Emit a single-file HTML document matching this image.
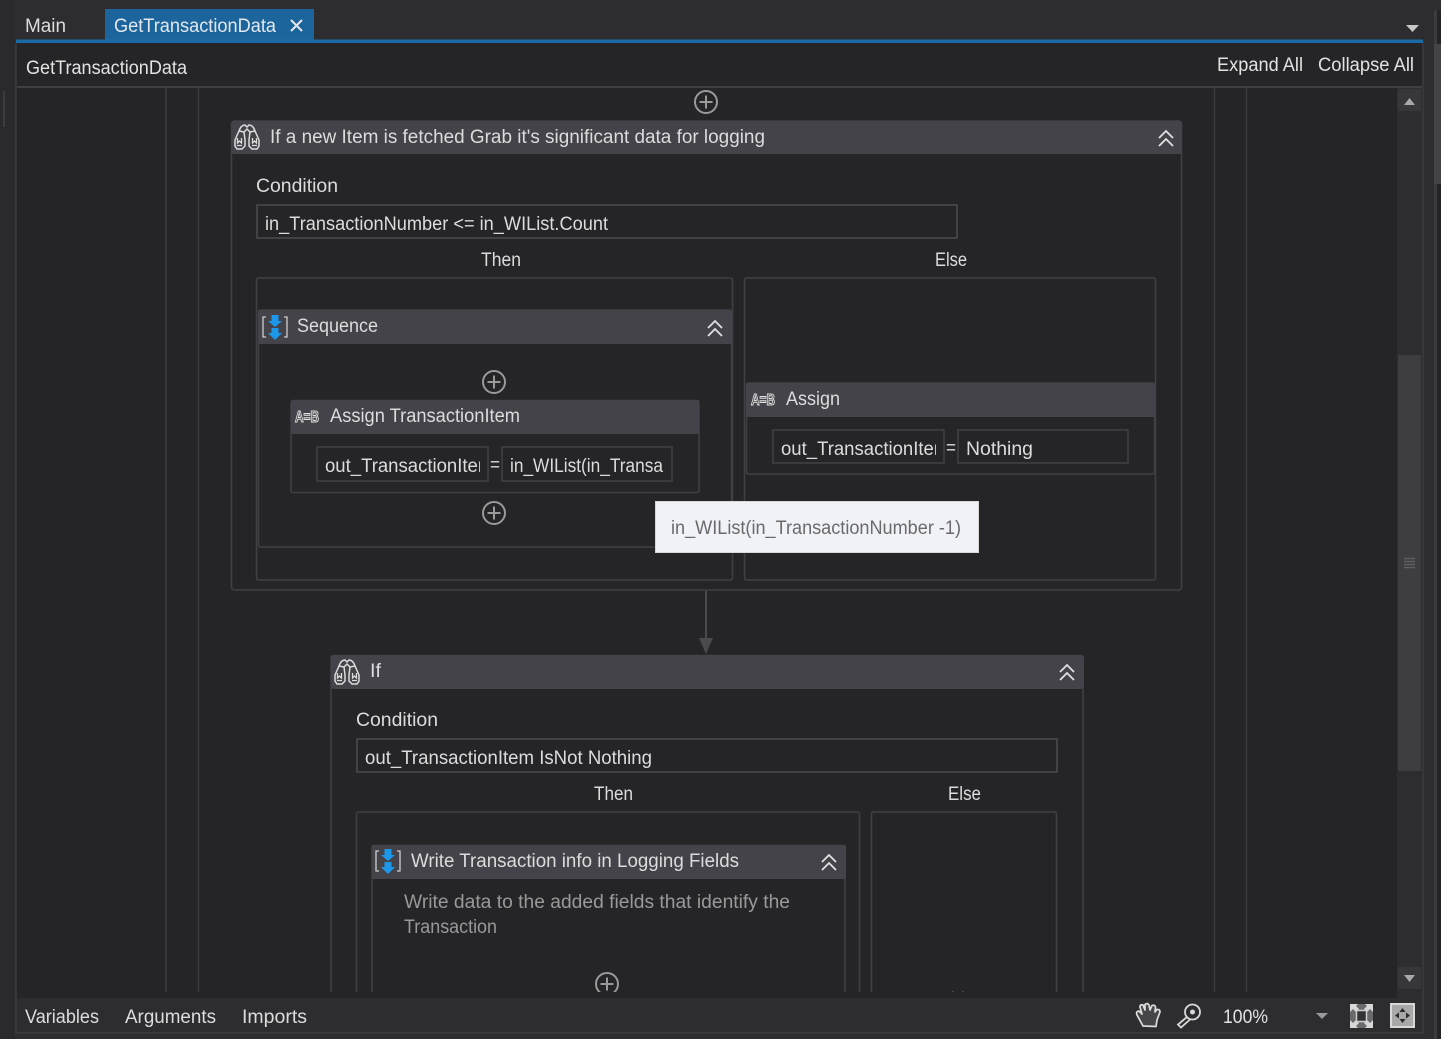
<!DOCTYPE html>
<html><head><meta charset="utf-8"><title>GetTransactionData</title>
<style>
html,body{margin:0;padding:0;background:#2d2d30;width:1441px;height:1039px;overflow:hidden}
svg{display:block}
text{font-family:"Liberation Sans",sans-serif;font-size:19px;fill:#dcdcdc}
.b{fill:none;stroke:#404044;stroke-width:1.600}
.h{fill:#434349}
</style></head><body>
<svg width="1441" height="1039" viewBox="0 0 1441 1039" xmlns="http://www.w3.org/2000/svg">
<defs>
<clipPath id="c"><rect x="17" y="87" width="1380" height="905"/></clipPath>
<clipPath id="t1"><rect x="320" y="450" width="160" height="30"/></clipPath>
<clipPath id="t2"><rect x="776" y="433" width="160" height="30"/></clipPath>
<g id="plus" fill="none" stroke="#9a9a9a" stroke-width="2"><circle cx="0" cy="0" r="11"/><path d="M-6.500 0H6.500M0-6.500V6.500"/></g>
<path id="chev" d="M-7 -1L0 -8L7 -1M-7 7L0 0L7 7" fill="none" stroke="#e0e0e0" stroke-width="1.800"/>
<g id="if" fill="none" stroke="#dcdcdc" stroke-width="1.500">
<path d="M-8 -6Q-6 -12 -2 -12L0 -10L2 -12Q6 -12 8 -6"/>
<path d="M-3 -5L0 -8L3 -5"/>
<path d="M-8 -6L-12 3V9L-10 12H-5L-2 9V3L-3 -5Z"/>
<path d="M8 -6L12 3V9L10 12H5L2 9V3L3 -5Z"/>
<path d="M-9.500 1V6L-7.500 4L-5.500 6V1M5.500 1V6L7.500 4L9.500 6V1" stroke-width="1.300"/>
<path d="M-10 8.500H-5M5 8.500H10" stroke-width="1.300"/>
</g>
<g id="seq"><path d="M-9 -10H-12V10H-9M9 -10H12V10H9" fill="none" stroke="#cfcfcf" stroke-width="1.300"/><path d="M-3.500 -12H3.500V-6H7L0 0L-7 -6H-3.500Z M-3.500 1H3.500V6H7L0 13L-7 6H-3.500Z" fill="#1c97ea"/></g>
<g id="ab"><text x="-12" y="6" style="font-size:16px;font-weight:bold;fill:#4a4a4e;stroke:#e0e0e0;stroke-width:1" textLength="24" lengthAdjust="spacingAndGlyphs">A=B</text></g>
</defs>

<rect width="1441" height="1039" fill="#2d2d30"/>
<rect x="0" y="0" width="15" height="1039" fill="#2a2a2d"/>
<rect x="16" y="42" width="1407" height="990" fill="#252528"/>
<path d="M16 42V1034M1423 42V1034" stroke="#3c3c40" stroke-width="1.500"/>
<rect x="3" y="91" width="2" height="36" fill="#3c3c40"/>
<rect x="1430" y="0" width="11" height="1039" fill="#2d2d30"/>
<rect x="1434" y="10" width="3" height="1029" fill="#3a3a3e"/>
<rect x="1437" y="10" width="4" height="1029" fill="#242426"/>
<rect x="1434" y="44" width="7" height="140" fill="#444448"/>

<!-- tabs -->
<rect x="105" y="9" width="209" height="31" fill="#1c659c"/>
<rect x="16" y="39.500" width="1407" height="3.500" fill="#1b6aa5"/>
<text x="25" y="32" textLength="41" lengthAdjust="spacingAndGlyphs">Main</text>
<text x="114" y="32" textLength="162" lengthAdjust="spacingAndGlyphs" style="fill:#e4e8ee">GetTransactionData</text>
<path d="M291 20L302 31M302 20L291 31" stroke="#e6e6e6" stroke-width="2"/>
<path d="M1406 25H1419L1412.500 32Z" fill="#c8c8c8"/>

<!-- breadcrumb -->
<text x="26" y="74" textLength="161" lengthAdjust="spacingAndGlyphs" style="fill:#e2e2e2">GetTransactionData</text>
<text x="1217" y="71" textLength="86" lengthAdjust="spacingAndGlyphs" style="fill:#e2e2e2">Expand All</text>
<text x="1318" y="71" textLength="96" lengthAdjust="spacingAndGlyphs" style="fill:#e2e2e2">Collapse All</text>
<rect x="17" y="86" width="1405" height="2" fill="#3f3f43"/>

<!-- scrollbar -->
<rect x="1397" y="88" width="25" height="910" fill="#2d2d30"/>
<rect x="1398" y="89" width="23" height="22" fill="#37373b"/>
<path d="M1404 105H1415L1409.500 98Z" fill="#a8a8a8"/>
<rect x="1398" y="355" width="23" height="416" fill="#3e3e42"/>
<path d="M1404 558.500H1415M1404 561.500H1415M1404 564.500H1415M1404 567.500H1415" stroke="#5f5f63" stroke-width="1.500" fill="none"/>
<rect x="1398" y="967" width="23" height="22" fill="#37373b"/>
<path d="M1404 975H1415L1409.500 982Z" fill="#a8a8a8"/>

<g clip-path="url(#c)">
<path d="M166 88V992M198.500 88V992M1214.500 88V992M1246.500 88V992" stroke="#3c3c40" stroke-width="1.500"/>
<use href="#plus" x="706" y="102"/>

<!-- If 1 -->
<rect x="231.500" y="121" width="950" height="469" rx="3" class="b"/>
<rect x="231" y="121" width="951" height="33" rx="3" class="h"/>
<use href="#if" x="247" y="137"/>
<text x="270" y="143" textLength="495" lengthAdjust="spacingAndGlyphs">If a new Item is fetched Grab it's significant data for logging</text>
<use href="#chev" x="1166" y="139"/>
<text x="256" y="192" textLength="82" lengthAdjust="spacingAndGlyphs">Condition</text>
<rect x="257" y="205" width="700" height="33" class="b" style="stroke:#4a4a4e"/>
<text x="265" y="230" textLength="343" lengthAdjust="spacingAndGlyphs">in_TransactionNumber &lt;= in_WIList.Count</text>
<text x="481" y="266" textLength="40" lengthAdjust="spacingAndGlyphs">Then</text>
<text x="935" y="266" textLength="32" lengthAdjust="spacingAndGlyphs">Else</text>
<rect x="256.500" y="278" width="476" height="302" rx="2" class="b"/>
<rect x="744.500" y="278" width="411" height="302" rx="2" class="b"/>

<!-- Sequence -->
<rect x="258.500" y="310" width="473" height="237" rx="2" class="b"/>
<rect x="258" y="310" width="474" height="34" rx="2" class="h"/>
<use href="#seq" x="275" y="327"/>
<text x="297" y="332" textLength="81" lengthAdjust="spacingAndGlyphs">Sequence</text>
<use href="#chev" x="715" y="329"/>
<use href="#plus" x="494" y="382"/>

<!-- Assign TransactionItem -->
<rect x="291" y="400.500" width="408" height="92" rx="2" class="b"/>
<rect x="291" y="400" width="408" height="34" rx="2" class="h"/>
<use href="#ab" x="307" y="416"/>
<text x="330" y="422" textLength="190" lengthAdjust="spacingAndGlyphs">Assign TransactionItem</text>
<rect x="317" y="447" width="171" height="34" class="b"/>
<g clip-path="url(#t1)"><text x="325" y="472" textLength="159" lengthAdjust="spacingAndGlyphs">out_TransactionIter</text></g>
<text x="490" y="471" textLength="10" lengthAdjust="spacingAndGlyphs">=</text>
<rect x="502" y="447" width="170" height="34" class="b"/>
<text x="510" y="472" textLength="153" lengthAdjust="spacingAndGlyphs">in_WIList(in_Transa</text>
<use href="#plus" x="494" y="513"/>

<!-- Assign -->
<rect x="746.500" y="383" width="408" height="91" rx="2" class="b"/>
<rect x="746" y="383" width="409" height="34" rx="2" class="h"/>
<use href="#ab" x="763" y="399"/>
<text x="786" y="405" textLength="54" lengthAdjust="spacingAndGlyphs">Assign</text>
<rect x="773" y="430" width="171" height="33" class="b"/>
<g clip-path="url(#t2)"><text x="781" y="455" textLength="159" lengthAdjust="spacingAndGlyphs">out_TransactionIter</text></g>
<text x="946" y="454" textLength="10" lengthAdjust="spacingAndGlyphs">=</text>
<rect x="958" y="430" width="170" height="33" class="b"/>
<text x="966" y="455" textLength="67" lengthAdjust="spacingAndGlyphs">Nothing</text>

<!-- Tooltip -->
<rect x="655.500" y="501.500" width="323" height="51" fill="#f1f2f7" stroke="#d8d8d8"/>
<text x="671" y="534" textLength="290" lengthAdjust="spacingAndGlyphs" style="fill:#6a6a6a">in_WIList(in_TransactionNumber -1)</text>

<!-- connector -->
<path d="M706 591V640" stroke="#4a4a4e" stroke-width="2"/>
<path d="M699 638H713L706 654Z" fill="#4a4a4e"/>

<!-- If 2 -->
<path d="M331 1000V658Q331 655.500 334 655.500H1080Q1083 655.500 1083 658V1000" class="b"/>
<rect x="331" y="655" width="753" height="34" rx="3" class="h"/>
<use href="#if" x="347" y="672"/>
<text x="370" y="677" textLength="11" lengthAdjust="spacingAndGlyphs">If</text>
<use href="#chev" x="1067" y="673"/>
<text x="356" y="726" textLength="82" lengthAdjust="spacingAndGlyphs">Condition</text>
<rect x="357" y="739" width="700" height="33" class="b" style="stroke:#4a4a4e"/>
<text x="365" y="764" textLength="287" lengthAdjust="spacingAndGlyphs">out_TransactionItem IsNot Nothing</text>
<text x="594" y="800" textLength="39" lengthAdjust="spacingAndGlyphs">Then</text>
<text x="948" y="800" textLength="33" lengthAdjust="spacingAndGlyphs">Else</text>
<path d="M356.500 1000V814Q356.500 812 358.500 812H857.500Q859.500 812 859.500 814V1000" class="b"/>
<path d="M871.500 1000V814Q871.500 812 873.500 812H1054.500Q1056.500 812 1056.500 814V1000" class="b"/>

<!-- Write Transaction -->
<path d="M372 1000V847Q372 845.500 374 845.500H843Q845 845.500 845 847V1000" class="b"/>
<rect x="372" y="845" width="474" height="34" rx="2" class="h"/>
<use href="#seq" x="388" y="861"/>
<text x="411" y="867" textLength="328" lengthAdjust="spacingAndGlyphs">Write Transaction info in Logging Fields</text>
<use href="#chev" x="829" y="863"/>
<text x="404" y="908" textLength="386" lengthAdjust="spacingAndGlyphs" style="fill:#999">Write data to the added fields that identify the</text>
<text x="404" y="933" textLength="93" lengthAdjust="spacingAndGlyphs" style="fill:#999">Transaction</text>
<use href="#plus" x="607" y="984"/>
<text x="896" y="1005" textLength="115" lengthAdjust="spacingAndGlyphs" style="fill:#888;font-size:18px">Drop Activity Here</text>
</g>

<!-- bottom bar -->
<rect x="17" y="998" width="1405" height="34" fill="#2d2d30"/>
<rect x="16" y="1032" width="1407" height="1.500" fill="#3a3a3e"/>
<text x="25" y="1023" textLength="74" lengthAdjust="spacingAndGlyphs">Variables</text>
<text x="125" y="1023" textLength="91" lengthAdjust="spacingAndGlyphs">Arguments</text>
<text x="242" y="1023" textLength="65" lengthAdjust="spacingAndGlyphs">Imports</text>

<!-- hand -->
<path d="M1143 1026L1137 1015Q1135.500 1011.500 1139 1011L1142 1014L1140 1007Q1140 1004 1143 1005L1145 1010L1145 1004.500Q1147.500 1002.500 1149 1005L1150 1010L1152 1005.500Q1155 1004.500 1155.500 1007L1155 1012L1157 1009.500Q1160 1009 1160 1012L1157 1020L1156 1026.500Z" fill="#464649" stroke="#dcdcdc" stroke-width="1.700" stroke-linejoin="round"/>
<!-- zoom -->
<circle cx="1192.500" cy="1012" r="7.500" fill="none" stroke="#d8d8d8" stroke-width="1.800"/>
<circle cx="1192.500" cy="1012" r="2.500" fill="#d8d8d8"/>
<path d="M1187 1017L1178 1024.500L1181 1027.500L1190 1019.500" fill="none" stroke="#d8d8d8" stroke-width="1.800"/>
<text x="1223" y="1023" textLength="45" lengthAdjust="spacingAndGlyphs" style="fill:#e2e2e2">100%</text>
<path d="M1316 1013H1328L1322 1019Z" fill="#9a9a9a"/>
<!-- fit -->
<rect x="1350" y="1004" width="23" height="24" fill="#6a6a6d"/>
<path d="M1350 1004H1358L1356 1006L1359 1009L1356 1012L1353 1009L1350 1012ZM1373 1004H1365L1367 1006L1364 1009L1367 1012L1370 1009L1373 1012ZM1350 1028H1358L1356 1026L1359 1023L1356 1020L1353 1023L1350 1020ZM1373 1028H1365L1367 1026L1364 1023L1367 1020L1370 1023L1373 1020Z" fill="#d8d8d8"/>
<rect x="1356.500" y="1010.500" width="10" height="11" fill="#333336" stroke="#cfcfcf" stroke-width="1.500"/>
<!-- actual -->
<rect x="1391" y="1004" width="23" height="23" fill="#a8a8a8" stroke="#d8d8d8" stroke-width="2"/>
<path d="M1402.500 1008L1399.500 1012H1405.500ZM1402.500 1023L1399.500 1019H1405.500ZM1395 1015.500L1399 1012.500V1018.500ZM1410 1015.500L1406 1012.500V1018.500Z" fill="#2a2a2d"/>
</svg>
</body></html>
